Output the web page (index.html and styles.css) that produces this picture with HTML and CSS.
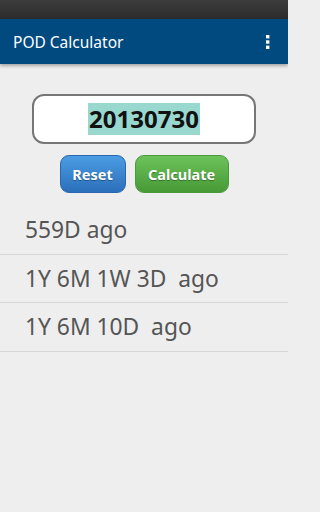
FILE: index.html
```html
<!DOCTYPE html>
<html>
<head>
<meta charset="utf-8">
<link rel="stylesheet" href="styles.css">
</head>
<body>
<div class="status"></div>
<header class="appbar">
  <span class="title">POD Calculator</span>
  <svg class="menu" width="6" height="16" viewBox="0 0 6 16"><rect x="1" y="1" width="3.4" height="3.4" fill="#fff"/><rect x="1" y="6.3" width="3.4" height="3.4" fill="#fff"/><rect x="1" y="11.6" width="3.4" height="3.4" fill="#fff"/></svg>
</header>
<main class="content">
  <div class="field"><span class="value">20130730</span></div>
  <div class="buttons">
    <button class="btn reset">Reset</button>
    <button class="btn calc">Calculate</button>
  </div>
  <ul class="list">
    <li>559D ago</li>
    <li>1Y 6M 1W 3D&nbsp; ago</li>
    <li>1Y 6M 10D&nbsp; ago</li>
  </ul>
</main>
</body>
</html>
```
FILE: styles.css
```css
html { background: #eeeeee; }
html, body { margin: 0; padding: 0; }
body {
  width: 288px;
  height: 512px;
  background: #eeeeee;
  font-family: "Noto Sans", "Open Sans", sans-serif;
  overflow: hidden;
}
.status {
  height: 19px;
  background: linear-gradient(#3c3c3c, #2c2c2c);
}
.appbar {
  height: 45px;
  background: #004a80;
  display: flex;
  align-items: center;
  justify-content: space-between;
  padding: 0 17px 0 13px;
  box-shadow: 0 2px 3px rgba(0,0,0,0.3);
  position: relative;
}
.title {
  color: #fff;
  font-size: 15.5px;
}
.menu { display: block; margin-top: 1px; }
.content { padding-top: 30px; }
.field {
  margin: 0 32px;
  height: 46px;
  border: 2px solid #767676;
  border-radius: 12px;
  background: #fff;
  display: flex;
  align-items: center;
  justify-content: center;
}
.value {
  background: #98d8cf;
  color: #111;
  font-weight: bold;
  font-size: 24px;
  line-height: 32px;
  padding: 0 1px;
}
.buttons {
  display: flex;
  justify-content: center;
  gap: 9px;
  margin-top: 11px;
}
.btn {
  height: 38px;
  border-radius: 9px;
  color: #fff;
  font-family: inherit;
  font-weight: bold;
  font-size: 14.5px;
  text-shadow: 0 1px 1px rgba(0,0,0,0.35);
  padding: 0;
  margin: 0;
}
.reset {
  width: 66px;
  background: linear-gradient(#4b9de3, #2b6fba);
  border: 1px solid #2a66ad;
}
.calc {
  width: 94px;
  background: linear-gradient(#6cc25a, #479a37);
  border: 1px solid #4a9a3c;
}
.list {
  list-style: none;
  margin: 13px 0 0;
  padding: 0;
}
.list li {
  height: 47.5px;
  border-bottom: 1px solid #d6d6d6;
  display: flex;
  align-items: center;
  padding-left: 25px;
  font-size: 22.8px;
  color: #555;
}
```
